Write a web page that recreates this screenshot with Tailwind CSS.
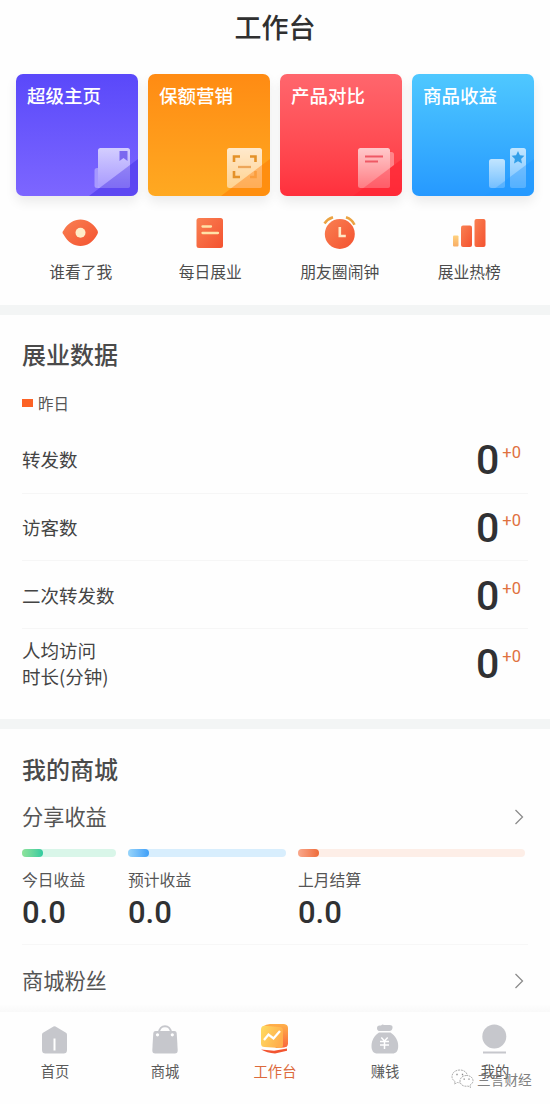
<!DOCTYPE html>
<html lang="zh-CN">
<head>
<meta charset="utf-8">
<title>工作台</title>
<script src="https://cdn.jsdelivr.net/npm/@tailwindcss/browser@4"></script>
</head>
<body class="bg-white">
<div class="w-[550px] h-[1104px] overflow-hidden flex flex-col bg-[#fefefe] font-['Noto_Sans_CJK_SC',sans-serif] text-[#4a4a4a]">
  <header class="h-[74px] shrink-0 text-center text-[27px] leading-[54px] font-medium text-[#303030]">工作台</header>

  <section class="h-[231px] shrink-0">
    <div class="flex gap-[10.5px] pl-4 text-[18.5px] leading-[22px] font-medium text-white">
      <div class="relative w-[121.5px] h-[122px] rounded-[7px] bg-linear-to-b from-[#5a48fa] to-[#7d66ff] shadow-[0_6px_12px_rgba(0,0,0,0.08)] pt-[10px] pl-[11px]">超级主页
        <svg class="absolute right-0 bottom-0" width="50" height="50" viewBox="0 0 50 50">
          <defs><linearGradient id="g1" x1="0" y1="0" x2="0" y2="1"><stop offset="0" stop-color="#fff" stop-opacity=".7"/><stop offset="1" stop-color="#fff" stop-opacity=".35"/></linearGradient></defs>
          <path d="M1 50L50 13v30a7 7 0 0 1-7 7z" fill="#4a34ea" fill-opacity=".6"/>
          <path d="M10 22H9a2.500 2.500 0 0 0-2.500 2.500v15A2.500 2.500 0 0 0 9 42h3l-2-2z" fill="#fff" fill-opacity=".35"/>
          <rect x="10" y="2" width="32" height="40" rx="2.500" fill="url(#g1)"/>
          <path d="M31.500 5h8v10l-4-3-4 3z" fill="#7a68ef"/>
          <path d="M11.500 42L42 19v20.500a2.500 2.500 0 0 1-2.500 2.500z" fill="#5a42f0" fill-opacity=".38"/>
        </svg>
      </div>
      <div class="relative w-[121.5px] h-[122px] rounded-[7px] bg-linear-to-b from-[#ff8b13] to-[#ffa921] shadow-[0_6px_12px_rgba(0,0,0,0.08)] pt-[10px] pl-[11px]">保额营销
        <svg class="absolute right-0 bottom-0" width="50" height="50" viewBox="0 0 50 50">
          <defs><linearGradient id="g2" x1="0" y1="0" x2="0" y2="1"><stop offset="0" stop-color="#fff" stop-opacity=".78"/><stop offset="1" stop-color="#fff" stop-opacity=".5"/></linearGradient></defs>
          <path d="M1 50L50 13v30a7 7 0 0 1-7 7z" fill="#ff8509" fill-opacity=".7"/>
          <rect x="7" y="2" width="35" height="40" rx="2.500" fill="url(#g2)"/>
          <g fill="none" stroke="#e49128" stroke-width="2.600"><path d="M14 16v-5.500h6M30 10.500h5.500V16M14 25v6h6"/><path d="M18 21h13" stroke="#eda65a" stroke-width="2.300"/></g>
          <path d="M30 31h5.500v-6" fill="none" stroke="#f6a650" stroke-width="2.600"/>
          <path d="M11.500 42L42 19v20.500a2.500 2.500 0 0 1-2.500 2.500z" fill="#ff9428" fill-opacity=".5"/>
        </svg>
      </div>
      <div class="relative w-[121.5px] h-[122px] rounded-[7px] bg-linear-to-b from-[#ff666d] to-[#ff2f3c] shadow-[0_6px_12px_rgba(0,0,0,0.08)] pt-[10px] pl-[11px]">产品对比
        <svg class="absolute right-0 bottom-0" width="50" height="50" viewBox="0 0 50 50">
          <path d="M1 50L50 13v30a7 7 0 0 1-7 7z" fill="#ff2434" fill-opacity=".6"/>
          <path d="M38 6h1.500A2.500 2.500 0 0 1 42 8.500V19l-4 3z" fill="#fff" fill-opacity=".35"/>
          <rect x="6" y="2" width="32" height="40" rx="2.500" fill="url(#g1)"/>
          <path d="M13 10.500h18M13 15.500h13" stroke="#ef5865" stroke-width="2.200"/>
          <path d="M11.500 42L38 22v17.500a2.500 2.500 0 0 1-2.500 2.500z" fill="#ff3040" fill-opacity=".35"/>
        </svg>
      </div>
      <div class="relative w-[121.5px] h-[122px] rounded-[7px] bg-linear-to-b from-[#4fc8ff] to-[#2699ff] shadow-[0_6px_12px_rgba(0,0,0,0.08)] pt-[10px] pl-[11px]">商品收益
        <svg class="absolute right-0 bottom-0" width="50" height="50" viewBox="0 0 50 50">
          <path d="M1 50L50 13v30a7 7 0 0 1-7 7z" fill="#239aff" fill-opacity=".6"/>
          <rect x="5" y="13" width="16" height="29" rx="2.500" fill="url(#g1)"/>
          <rect x="26" y="2" width="16" height="40" rx="2.500" fill="url(#g1)"/>
          <path d="M34 5l1.900 4.200 4.500.5-3.300 3.200.9 4.600-4-2.300-4 2.300.9-4.600-3.300-3.200 4.500-.5z" fill="#319fe9"/>
          <path d="M11.500 42L21 35v4.500a2.500 2.500 0 0 1-2.500 2.500zM26 31l16-12v20.500a2.500 2.500 0 0 1-2.500 2.500h-11a2.500 2.500 0 0 1-2.500-2.500z" fill="#2a9dff" fill-opacity=".4"/>
        </svg>
      </div>
    </div>
    <div class="grid grid-cols-4 px-4 pt-[18px] text-center text-[15.8px] leading-[22px] text-[#4c4c4c]">
      <div class="flex flex-col items-center gap-[9px]">
        <svg width="38" height="38" viewBox="0 0 38 38"><defs><linearGradient id="o" x1="0" y1="0" x2="1" y2="1"><stop offset="0" stop-color="#f98052"/><stop offset="1" stop-color="#f45230"/></linearGradient></defs>
          <path d="M.5 18.500q0-1 1-2C6 9 12 5.500 18.500 5.500S31 9 35.500 16.500q1 1.500 0 3.500C31 28.500 25 32 18.500 32S6 28.500 1.500 20.500q-1-1-1-2z" fill="url(#o)"/><circle cx="18.500" cy="18.800" r="5" fill="#ffecc8"/></svg>
        谁看了我
      </div>
      <div class="flex flex-col items-center gap-[9px]">
        <svg width="38" height="38" viewBox="0 0 38 38"><rect x="5.500" y="4" width="26.500" height="30" rx="2.500" fill="url(#o)"/><path d="M11.500 12.500h8.500M11.500 19H27" stroke="#ffe2a8" stroke-width="2.300" stroke-linecap="round"/></svg>
        每日展业
      </div>
      <div class="flex flex-col items-center gap-[9px]">
        <svg width="38" height="38" viewBox="0 0 38 38"><path d="M3.500 9.500Q6.500 5 12 3.300M25 3.300q6 2 8.500 7.500" fill="none" stroke="#eba342" stroke-width="2.600"/><circle cx="18.800" cy="20" r="15" fill="url(#o)"/><path d="M18.800 13v9h6" fill="none" stroke="#ffe8c5" stroke-width="2.600"/></svg>
        朋友圈闹钟
      </div>
      <div class="flex flex-col items-center gap-[9px]">
        <svg width="38" height="38" viewBox="0 0 38 38"><defs><linearGradient id="y" x1="0" y1="0" x2="0" y2="1"><stop offset="0" stop-color="#ffd27e"/><stop offset="1" stop-color="#f8ad66"/></linearGradient></defs><rect x="3" y="21.500" width="5.500" height="11" rx="1" fill="url(#y)"/><rect x="11" y="11.500" width="11" height="21.500" rx="2" fill="url(#o)"/><rect x="24.500" y="5" width="11" height="28" rx="2" fill="url(#o)"/></svg>
        展业热榜
      </div>
    </div>
  </section>

  <div class="h-[10px] shrink-0 bg-[#f3f5f5]"></div>

  <section class="h-[404px] shrink-0 px-[22px] pt-[23px]">
    <h2 class="text-[24px] leading-8 font-medium">展业数据</h2>
    <div class="mt-[22px] flex items-center gap-[5px] text-[15.5px] leading-[22px] text-[#555]"><span class="w-[11px] h-2 bg-[#fc6225]"></span>昨日</div>
    <div class="mt-3 text-[18.5px] leading-[26px] text-[#444]">
      <div class="h-[67.7px] flex items-center justify-between border-b border-[#f6f6f6]"><span>转发数</span><span class="flex pr-[7px] pt-[2px] font-[Roboto,sans-serif]"><b class="text-[41px] leading-[44px] font-medium text-[#303133]">0</b><i class="not-italic text-[16.5px] leading-[30px] ml-[3px] text-[#e0713f]">+0</i></span></div>
      <div class="h-[67.7px] flex items-center justify-between border-b border-[#f6f6f6]"><span>访客数</span><span class="flex pr-[7px] pt-[2px] font-[Roboto,sans-serif]"><b class="text-[41px] leading-[44px] font-medium text-[#303133]">0</b><i class="not-italic text-[16.5px] leading-[30px] ml-[3px] text-[#e0713f]">+0</i></span></div>
      <div class="h-[67.7px] flex items-center justify-between border-b border-[#f6f6f6]"><span>二次转发数</span><span class="flex pr-[7px] pt-[2px] font-[Roboto,sans-serif]"><b class="text-[41px] leading-[44px] font-medium text-[#303133]">0</b><i class="not-italic text-[16.5px] leading-[30px] ml-[3px] text-[#e0713f]">+0</i></span></div>
      <div class="h-[67.7px] flex items-center justify-between"><span>人均访问<br>时长(分钟)</span><span class="flex pr-[7px] pt-[2px] font-[Roboto,sans-serif]"><b class="text-[41px] leading-[44px] font-medium text-[#303133]">0</b><i class="not-italic text-[16.5px] leading-[30px] ml-[3px] text-[#e0713f]">+0</i></span></div>
    </div>
  </section>

  <div class="h-[10px] shrink-0 bg-[#f3f5f5]"></div>

  <section class="h-[276px] shrink-0 px-[22px] pt-6">
    <h2 class="text-[24px] leading-8 font-medium">我的商城</h2>
    <div class="mt-4 flex items-center justify-between pr-[4px] text-[21.2px] leading-[30px] text-[#555]">分享收益
      <svg class="mt-[2px]" width="10" height="16" viewBox="0 0 10 16" fill="none" stroke="#8c8c8c" stroke-width="1.300"><path d="M1.500 1l7 7-7 7"/></svg></div>
    <div class="mt-[18px] flex gap-3 text-[15.8px] leading-[22px] text-[#555]">
      <div class="w-[94px]"><div class="h-2 rounded-full bg-[#d9f6e9]"><div class="h-2 w-[21px] rounded-full bg-linear-to-r from-[#8de39a] to-[#2dcba0]"></div></div><div class="mt-3">今日收益</div><div class="mt-[3px] mb-[-1px] text-[31px] leading-[38px] font-medium font-[Roboto,sans-serif] text-[#303133]">0.0</div></div>
      <div class="w-[158px]"><div class="h-2 rounded-full bg-[#d8eefd]"><div class="h-2 w-[21px] rounded-full bg-linear-to-r from-[#98d5fa] to-[#3d9ff8]"></div></div><div class="mt-3">预计收益</div><div class="mt-[3px] mb-[-1px] text-[31px] leading-[38px] font-medium font-[Roboto,sans-serif] text-[#303133]">0.0</div></div>
      <div class="w-[227px]"><div class="h-2 rounded-full bg-[#fdeee7]"><div class="h-2 w-[21px] rounded-full bg-linear-to-r from-[#f9a88c] to-[#ee6a36]"></div></div><div class="mt-3">上月结算</div><div class="mt-[3px] mb-[-1px] text-[31px] leading-[38px] font-medium font-[Roboto,sans-serif] text-[#303133]">0.0</div></div>
    </div>
    <div class="mt-[13px] border-t border-[#f7f7f7] pt-5 flex items-center justify-between pr-[4px] text-[21.2px] leading-[30px] text-[#555]">商城粉丝
      <svg class="mt-px" width="10" height="16" viewBox="0 0 10 16" fill="none" stroke="#8c8c8c" stroke-width="1.300"><path d="M1.500 1l7 7-7 7"/></svg></div>
  </section>

  <div class="h-[7px] shrink-0 bg-linear-to-b from-[#fdfdfd] to-[#f9f9f9]"></div>
  <nav class="relative flex-1 grid grid-cols-5 pt-2 bg-[#fefefe] text-[14.3px] leading-5 text-[#5a5a5a]">
    <div class="flex flex-col items-center gap-[5px]">
      <svg width="36" height="36" viewBox="0 0 36 36"><path d="M16.500 6.600q1-.6 2 0l10.500 6.200q1 .6 1 2V30q0 3.500-3.500 3.500h-18Q5 33.500 5 30V14.800q0-1.400 1-2z" fill="#c6c7cc"/><path d="M17.500 18.500v12" stroke="#fff" stroke-width="2"/></svg>首页</div>
    <div class="flex flex-col items-center gap-[5px]">
      <svg width="36" height="36" viewBox="0 0 36 36"><path d="M12 13c0-9 12-9 12 0" fill="none" stroke="#c6c7cc" stroke-width="2"/><path d="M8.500 11h19q2 0 2.200 2l1 17q.2 3.500-3 3.500H8.300q-3.200 0-3-3.500l1-17q.2-2 2.200-2z" fill="#c6c7cc"/><circle cx="10.500" cy="14.800" r="1.600" fill="#fff"/><circle cx="25.300" cy="14.800" r="1.600" fill="#fff"/></svg>商城</div>
    <div class="flex flex-col items-center gap-[5px] text-[#dc6a3c]">
      <svg width="36" height="36" viewBox="0 0 36 36"><defs><linearGradient id="w" x1="0" y1="0" x2="1" y2=".4"><stop offset="0" stop-color="#ffdc62"/><stop offset="1" stop-color="#ffae4c"/></linearGradient><linearGradient id="w2" x1="0" y1="0" x2="0" y2="1"><stop offset="0" stop-color="#ffb04a"/><stop offset="1" stop-color="#f9663c"/></linearGradient></defs><path d="M6 6.500Q9 4 13 4h14q4 .5 4 4v16q-.5 3-4 3.500l-8 .5z" fill="url(#w2)"/><path d="M7.500 5.800L23 7q3 .3 3 3.500v14.500q0 3-3 3L7.500 27Q4 27 4 23.500V9.500q0-3.500 3.500-3.700z" fill="url(#w)"/><path d="M4 29.500l13 1.300 13-2.200v2.200L18 33.500q-8-.5-14-4z" fill="#f25430"/><path d="M7 20l4.500-5.500 5 4L23 11" fill="none" stroke="#fff" stroke-width="2.300"/></svg>工作台</div>
    <div class="flex flex-col items-center gap-[5px]">
      <svg width="36" height="36" viewBox="0 0 36 36"><path d="M12.500 5.500h1.500q1.500-1.500 3-.5h5.500q3.500 0 3 3-.5 3-3 3H13q-3 0-3-2.800 0-2.700 2.500-2.700z" fill="#c6c7cc"/><path d="M12 12.500h11.500c4.500 3 7.700 7.500 7.700 13.500 0 5-2 7.500-6 7.500H10.500c-4 0-6-2.500-6-7.500 0-6 3-10.500 7.500-13.500z" fill="#c6c7cc"/><path d="M14.300 17.500l3.200 3.500 3.200-3.500M13 21.500h9M13 25h9M17.500 21v8" fill="none" stroke="#fff" stroke-width="1.500"/></svg>赚钱</div>
    <div class="flex flex-col items-center gap-[5px]">
      <svg width="36" height="36" viewBox="0 0 36 36"><circle cx="17.300" cy="16.500" r="12" fill="#c6c7cc"/><path d="M6 32.500h23" stroke="#c6c7cc" stroke-width="2"/></svg>我的</div>
    <div class="absolute left-[451px] top-[56px] flex items-center gap-[3px] text-[13.7px] leading-[22px] text-[#808080]">
      <svg width="23" height="20" viewBox="0 0 23 20" fill="#fff" stroke="#999" stroke-width=".8" stroke-dasharray="2 .8"><path d="M9 1C4 1 1 4 1 7.500q0 3 3 5L3.500 15l3-1.500q5 1 8-1.500 2-2 2-4.500C16.500 4 13.500 1 9 1z"/><path d="M15.500 6.500c-4 0-6.500 2.500-6.500 5.500 0 4 4 6 8 5l2.500 1.500-.5-2.500q3-1.700 3-4.300c0-3-2.700-5.200-6.500-5.200z"/><path d="M6 4.800v1.400M11.500 4.800v1.400M13.200 9.500v1.200M18 9.500v1.200" stroke="#888" stroke-width="1.300" stroke-dasharray="none"/></svg>
      三言财经</div>
  </nav>
</div>
</body>
</html>
